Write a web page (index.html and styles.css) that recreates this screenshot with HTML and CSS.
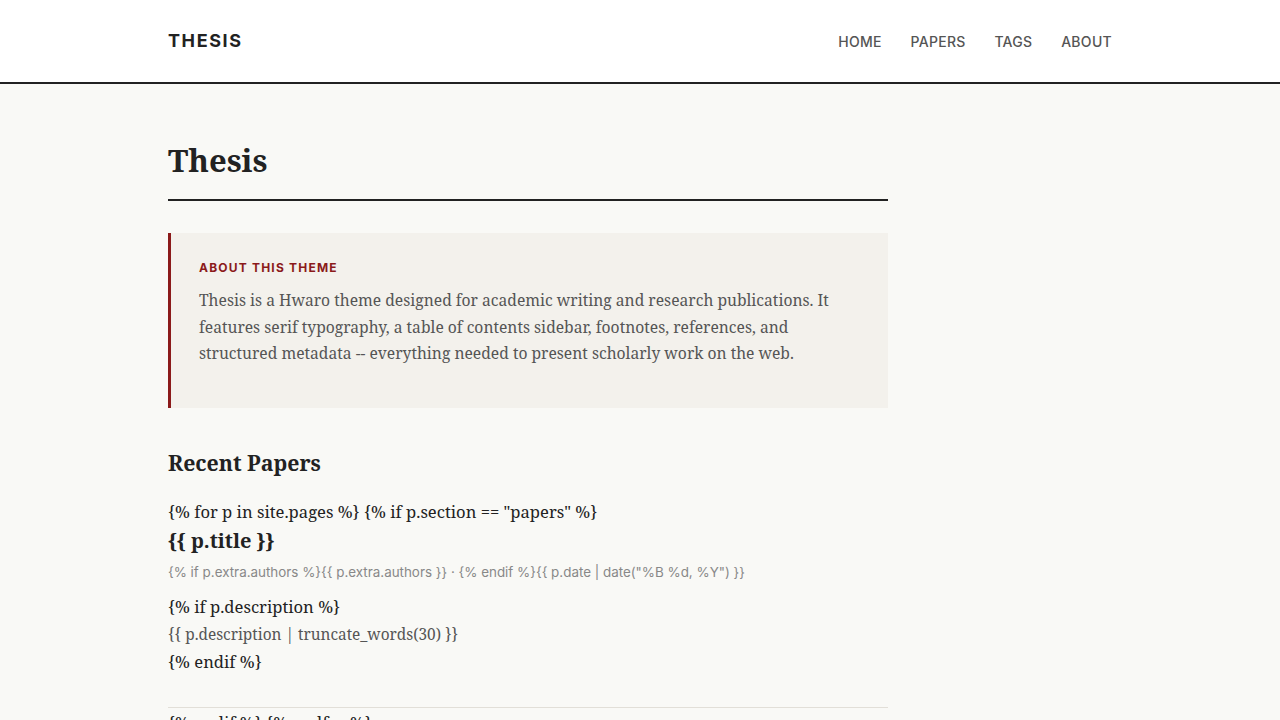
FILE: index.html
```html
<!DOCTYPE html>
<html lang="en">
<head>
<meta charset="utf-8">
<title>Thesis</title>
<link rel="stylesheet" href="styles.css">
</head>
<body>
<header class="site-header">
  <div class="header-inner">
    <a class="logo" href="#">THESIS</a>
    <nav class="nav">
      <a href="#">HOME</a>
      <a href="#">PAPERS</a>
      <a href="#">TAGS</a>
      <a href="#">ABOUT</a>
    </nav>
  </div>
</header>
<main class="main">
  <div class="content">
    <h1 class="page-title">Thesis</h1>
    <section class="about">
      <div class="about-label">ABOUT THIS THEME</div>
      <p class="about-text">Thesis is a Hwaro theme designed for academic writing and research publications. It features serif typography, a table of contents sidebar, footnotes, references, and structured metadata -- everything needed to present scholarly work on the web.</p>
    </section>
    <h2 class="section-title">Recent Papers</h2>
    <div class="paper">
      <div class="tpl">{% for p in site.pages %} {% if p.section == "papers" %}</div>
      <h3 class="paper-title">{{ p.title }}</h3>
      <div class="paper-meta">{% if p.extra.authors %}{{ p.extra.authors }} · {% endif %}{{ p.date | date("%B %d, %Y") }}</div>
      <div class="tpl tpl-gap">{% if p.description %}</div>
      <div class="paper-desc">{{ p.description | truncate_words(30) }}</div>
      <div class="tpl">{% endif %}</div>
    </div>
    <div class="tpl tpl-end">{% endif %} {% endfor %}</div>
  </div>
</main>
</body>
</html>
```
FILE: styles.css
```css
* { box-sizing: border-box; }
html, body { margin: 0; padding: 0; }
body {
  background: #f9f9f6;
  color: #222;
  font-family: "Noto Serif", "DejaVu Serif", serif;
}
a { text-decoration: none; color: inherit; }

.site-header {
  background: #ffffff;
  border-bottom: 2px solid #222;
}
.header-inner {
  width: 944px;
  margin: 0 auto;
  height: 82px;
  display: flex;
  align-items: center;
  justify-content: space-between;
}
.logo {
  font-family: "Inter", "Liberation Sans", sans-serif;
  font-weight: 700;
  font-size: 18px;
  letter-spacing: 1.6px;
  color: #222;
  margin-top: -1px;
}
.nav {
  display: flex;
  gap: 28.7px;
}
.nav a {
  font-family: "Inter", "Liberation Sans", sans-serif;
  font-size: 14px;
  font-weight: 500;
  letter-spacing: 0.3px;
  color: #555;
}

.main {
  width: 944px;
  margin: 0 auto;
  padding-top: 55px;
}
.content {
  width: 720px;
}
.page-title {
  margin: 0;
  font-size: 31px;
  font-weight: 700;
  line-height: 42px;
  padding-bottom: 18px;
  border-bottom: 2px solid #222;
  color: #222;
}
.about {
  margin-top: 32px;
  background: #f3f1ec;
  border-left: 3px solid #8b1a1a;
  padding: 28px 28px 41px 28px;
}
.about-label {
  font-family: "Inter", "Liberation Sans", sans-serif;
  font-size: 12px;
  font-weight: 700;
  letter-spacing: 1.2px;
  color: #8b1a1a;
  line-height: 14px;
}
.about-text {
  margin: 12px 0 0;
  font-size: 15.65px;
  line-height: 26.5px;
  color: #555;
}
.section-title {
  margin: 40px 0 0;
  font-size: 21.3px;
  font-weight: 700;
  line-height: 30px;
  color: #222;
}
.paper {
  margin-top: 21px;
  padding-bottom: 32px;
  border-bottom: 1px solid #e2dfd8;
}
.tpl {
  font-size: 16.6px;
  line-height: 26px;
  color: #222;
}
.paper-title {
  margin: 2px 0 0;
  font-size: 20px;
  font-weight: 700;
  line-height: 28px;
  color: #222;
}
.paper-meta {
  margin-top: 6px;
  font-family: "Inter", "Liberation Sans", sans-serif;
  font-size: 13.4px;
  line-height: 22px;
  color: #888;
}
.tpl-gap { margin-top: 11px; }
.paper-desc {
  font-size: 15.4px;
  line-height: 28px;
  padding-top: 1px;
  color: #555;
}
.tpl-end { margin-top: 2px; }
```
